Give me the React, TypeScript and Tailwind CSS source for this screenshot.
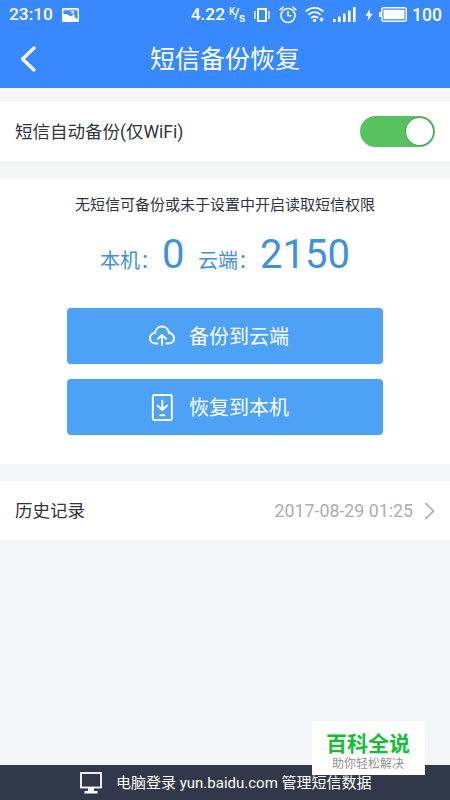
import { ReactNode } from "react";

function StatusBar() {
  return (
    <div className="h-[29px] flex items-center pl-[9px] pr-[8px] text-[17.3px] leading-[29px] font-medium">
      <span className="w-[53px]">23:10</span>
      <svg className="w-[17px] h-[14px]" viewBox="0 0 17 14">
        <rect x="0.7" y="0.7" width="15.6" height="12.6" rx="0.8" fill="none" stroke="#fff" strokeWidth="1.4" />
        <path d="M1 6L5 6.3L9 8.5L12.5 5.5V9L16 11.5V13H1Z" fill="#fff" />
        <path d="M1 1H16V3H13L10 4.5L8 3H1Z" fill="#fff" opacity="0.35" />
        <circle cx="10.6" cy="4.4" r="1.3" fill="#fff" />
      </svg>
      <span className="ml-auto">4.22</span>
      <span className="relative w-[18px] h-[20px] ml-1 text-[10px] leading-none">
        <span className="absolute left-0 top-[2px]">K</span>
        <span className="absolute left-[5px] top-[2px] text-[14px]">/</span>
        <span className="absolute left-[10px] top-[7px] text-[12px]">s</span>
      </span>
      <svg className="w-[16px] h-[16px] ml-[7px]" viewBox="0 0 16 16" fill="none" stroke="#fff">
        <rect x="4" y="2" width="8" height="12" strokeWidth="2" />
        <path d="M1 4V12M15 4V12" strokeWidth="1.3" />
      </svg>
      <svg className="w-[18px] h-[18px] ml-[9px]" viewBox="0 0 18 18" fill="none" stroke="#fff" strokeWidth="1.6" strokeLinecap="round">
        <circle cx="9" cy="9.5" r="7" />
        <path d="M9 5.7V9.7H12M1.2 3.7L4 1.4M16.8 3.7L14 1.4" />
      </svg>
      <svg className="w-[20px] h-[17px] ml-[8px]" viewBox="0 0 20 17" fill="none" stroke="#fff" strokeWidth="1.9">
        <path d="M0.8 5.5C5.5 0.6 13.5 0.6 18.2 5.5M3.4 8.8C6.8 5.2 12.2 5.2 15.6 8.8M6 12C8 10 11 10 13 12" />
        <circle cx="9.5" cy="14.4" r="1.6" fill="#fff" stroke="none" />
        <path d="M16.5 11L18.7 13.5L16.5 16L14.3 13.5Z" fill="#fff" stroke="none" />
      </svg>
      <svg className="w-[23px] h-[15px] ml-[8px]" viewBox="0 0 23 15" fill="#fff">
        <rect x="0" y="12" width="2.6" height="3" rx="0.5" />
        <rect x="5" y="9.5" width="2.6" height="5.5" rx="0.5" />
        <rect x="10" y="6.5" width="2.6" height="8.5" rx="0.5" />
        <rect x="15" y="3.5" width="2.6" height="11.5" rx="0.5" />
        <rect x="20" y="0" width="2.6" height="15" rx="0.5" />
      </svg>
      <svg className="w-[8px] h-[12px] ml-[9px]" viewBox="0 0 8 12">
        <path d="M5 0L0.5 6.8H3.4L2.6 12L7.6 4.8H4.5Z" fill="#fff" />
      </svg>
      <svg className="w-[28px] h-[15px] ml-[6px]" viewBox="0 0 28 15">
        <rect x="2.7" y="0.7" width="24.6" height="13.6" rx="2" fill="none" stroke="#fff" strokeWidth="1.4" />
        <rect x="4.5" y="2.7" width="21" height="9.6" rx="0.5" fill="#fff" />
        <path d="M0 5H2.5V10H0Z" fill="#fff" />
      </svg>
      <span className="ml-[5px] w-[30px] pt-px text-[17.5px]">100</span>
    </div>
  );
}

function ActionButton({ icon, label }: { icon: ReactNode; label: string }) {
  return (
    <button className="w-[316px] h-[56px] rounded-[4px] bg-[#4da1f6] text-white text-[20px] flex items-center pl-[82px]">
      {icon}
      <span className="ml-[14px] pt-[2px]">{label}</span>
    </button>
  );
}

export default function App() {
  return (
    <div className="w-[450px] h-[800px] overflow-hidden flex flex-col bg-[#f3f5f7] text-[#303440] font-['Roboto','Noto_Sans_CJK_SC',sans-serif]">
      <header className="h-[88px] shrink-0 bg-[#3888fe] text-white">
        <StatusBar />
        <div className="h-[59px] grid grid-cols-[60px_1fr_60px] items-center">
          <svg className="w-[16px] h-[26px] ml-[20px]" viewBox="0 0 16 26" fill="none" stroke="#fff" strokeWidth="3.2" strokeLinecap="round" strokeLinejoin="round">
            <path d="M14 2L2.5 13L14 24" />
          </svg>
          <h1 className="pt-[2px] text-[25px] leading-[57px] text-center">短信备份恢复</h1>
        </div>
      </header>

      <div className="mt-[14px] h-[59px] shrink-0 bg-white flex items-center justify-between pl-[15px] pr-[15px]">
        <span className="pt-[2px] text-[17.5px]">短信自动备份(仅WiFi)</span>
        <span className="w-[75px] h-[31px] rounded-full bg-[#56c35f] flex items-center justify-end pr-[2px]">
          <span className="w-[27px] h-[27px] rounded-full bg-white shadow-[0_0_1px_1px_rgba(80,120,80,0.5)]" />
        </span>
      </div>

      <section className="mt-[17px] h-[286px] shrink-0 bg-white flex flex-col items-center">
        <p className="mt-[16px] text-[15px] leading-[22px]">无短信可备份或未于设置中开启读取短信权限</p>
        <div className="mt-[15px] h-[48px] w-[250px] flex items-baseline text-[20px] text-[#4190d8] whitespace-nowrap">
          <span className="w-[62px]">本机：</span>
          <span className="w-[36px] text-[40px] leading-[48px]">0</span>
          <span className="w-[62px]">云端：</span>
          <span className="text-[40px] leading-[48px]">2150</span>
        </div>
        <div className="mt-[29px] flex flex-col gap-[15px]">
          <ActionButton
            label="备份到云端"
            icon={
              <svg className="w-[26px] h-[22px]" viewBox="0 0 26 22" fill="none" stroke="#fff" strokeWidth="2" strokeLinecap="round" strokeLinejoin="round">
                <path d="M8.5 18.5H6.5C3.5 18.5 1 16.3 1 13.2C1 10.4 3.2 8.2 6 8C6.4 4.3 9.3 1.6 13 1.6C16.7 1.6 19.5 4.2 20 8C22.9 8.2 25 10.4 25 13.2C25 16.3 22.5 18.5 19.5 18.5H17.5" />
                <path d="M13 19.8V10.5M9 13.8L13 10L17 13.8" />
              </svg>
            }
          />
          <ActionButton
            label="恢复到本机"
            icon={
              <svg className="w-[26px] h-[27px]" viewBox="0 0 26 27" fill="none" stroke="#fff" strokeWidth="1.9" strokeLinecap="round" strokeLinejoin="round">
                <rect x="3.8" y="1" width="19" height="25" rx="1.5" />
                <path d="M13.3 6.5V15.5M8.5 11.5L13.3 16L18.1 11.5M11.3 21.3H15.3" />
              </svg>
            }
          />
        </div>
      </section>

      <div className="mt-[17px] h-[59px] shrink-0 bg-white flex items-center pl-[15px] pr-[15px]">
        <span className="pt-[2px] text-[17.5px]">历史记录</span>
        <span className="ml-auto pt-[2px] text-[17.8px] text-[#adadad]">2017-08-29 01:25</span>
        <svg className="w-[11px] h-[18px] ml-[11px]" viewBox="0 0 11 18" fill="none" stroke="#b5b5b5" strokeWidth="1.8">
          <path d="M1.5 1L9.5 9L1.5 17" />
        </svg>
      </div>

      <footer className="relative mt-auto h-[35px] shrink-0 bg-[#303849] text-white text-[15px] flex items-center pl-[80px]">
        <svg className="w-[22px] h-[22px]" viewBox="0 0 22 22">
          <rect x="1" y="1" width="20" height="14.5" fill="none" stroke="#fff" strokeWidth="1.8" />
          <path d="M8 16H14V19H17.5V21.5H4.5V19H8Z" fill="#fff" />
        </svg>
        <span className="ml-[14px] pt-[2px] whitespace-nowrap">电脑登录 yun.baidu.com 管理短信数据</span>
        <div className="absolute left-[312px] bottom-[25px] w-[113px] h-[54px] bg-white flex flex-col items-center">
          <span className="mt-[11px] -ml-px text-[21px] leading-[25px] font-bold text-[#16bd37]">百科全说</span>
          <span className="-ml-px text-[12px] leading-[14px] text-[#929292]">助你轻松解决</span>
        </div>
      </footer>
    </div>
  );
}
